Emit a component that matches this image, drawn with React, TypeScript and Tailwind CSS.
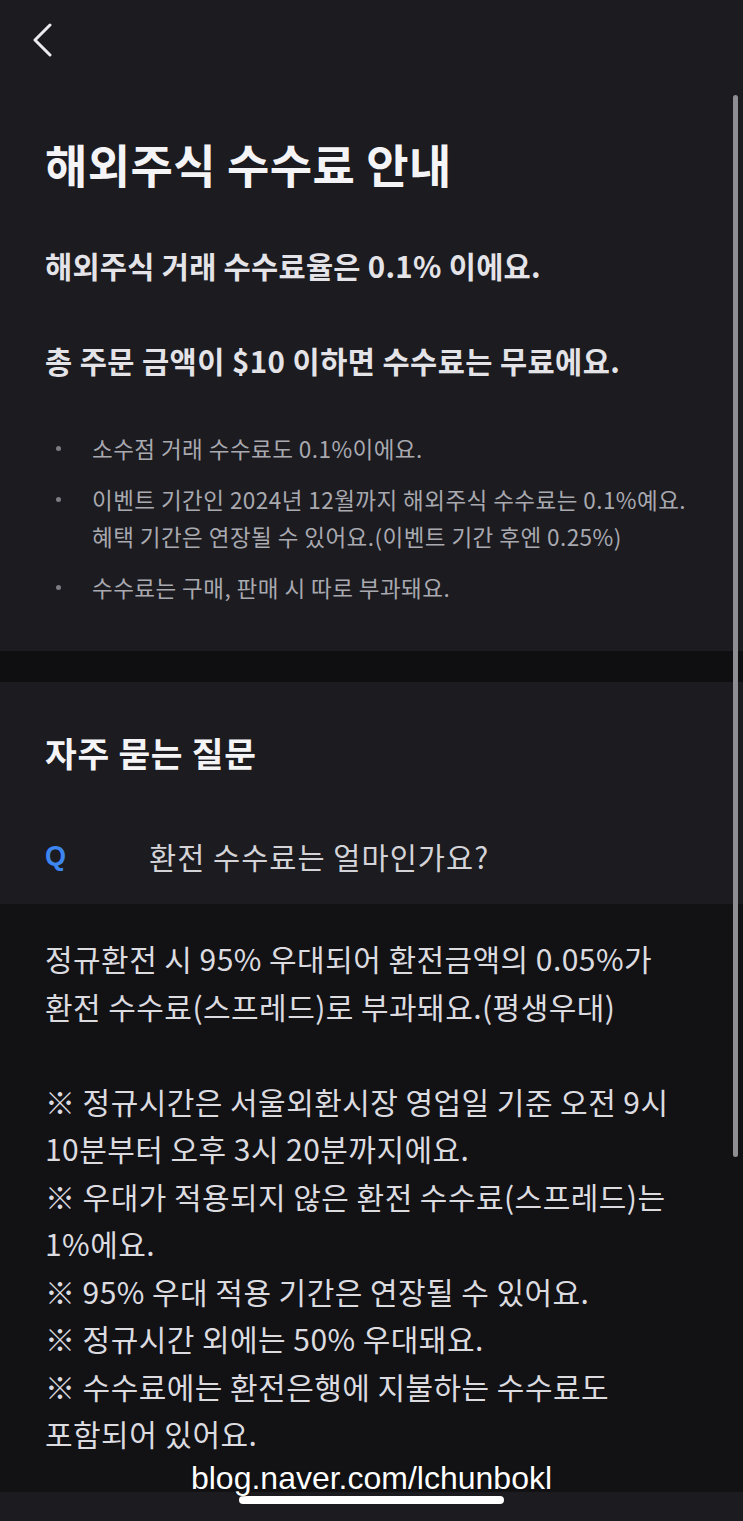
const KR = "font-['Noto_Sans_CJK_KR','Noto_Sans',sans-serif]";

const BULLETS = [
  ['소수점 거래 수수료도 0.1%이에요.'],
  ['이벤트 기간인 2024년 12월까지 해외주식 수수료는 0.1%예요.', '혜택 기간은 연장될 수 있어요.(이벤트 기간 후엔 0.25%)'],
  ['수수료는 구매, 판매 시 따로 부과돼요.'],
];

const ANSWER = [
  '정규환전 시 95% 우대되어 환전금액의 0.05%가',
  '환전 수수료(스프레드)로 부과돼요.(평생우대)',
  '',
  '※ 정규시간은 서울외환시장 영업일 기준 오전 9시',
  '10분부터 오후 3시 20분까지에요.',
  '※ 우대가 적용되지 않은 환전 수수료(스프레드)는',
  '1%에요.',
  '※ 95% 우대 적용 기간은 연장될 수 있어요.',
  '※ 정규시간 외에는 50% 우대돼요.',
  '※ 수수료에는 환전은행에 지불하는 수수료도',
  '포함되어 있어요.',
];

function BackIcon() {
  return (
    <svg width="24" height="36" viewBox="0 0 24 36" fill="none" aria-hidden>
      <path d="M17 3 L2 18 L17 33" stroke="#ececef" strokeWidth="3" strokeLinecap="round" strokeLinejoin="round" />
    </svg>
  );
}

export default function App() {
  return (
    <div className={`relative min-h-[1521px] w-[743px] overflow-hidden bg-[#1b1b20] ${KR}`}>
      {/* fee info */}
      <section className="bg-[#1b1b20] pb-[45px]">
        <div className="flex h-[80px] items-center pl-[33px]">
          <BackIcon />
        </div>
        <div className="px-[45px]">
          <h1 className="pt-[55px] text-[46px] font-bold leading-[56px] tracking-[0.01em] text-[#f4f4f6]">
            해외주식 수수료 안내
          </h1>
          <p className="mt-[54px] text-[29.5px] font-bold leading-[40px] tracking-[0.01em] text-[#e4e4e8]">
            해외주식 거래 수수료율은 0.1% 이에요.
          </p>
          <p className="mt-[55px] text-[29.5px] font-bold leading-[40px] tracking-[0.015em] text-[#e4e4e8]">
            총 주문 금액이 $10 이하면 수수료는 무료에요.
          </p>
          <ul className="mt-[50px] flex flex-col gap-[14px]">
            {BULLETS.map((lines) => (
              <li key={lines[0]} className="flex">
                <span className="flex h-[37px] w-[47px] shrink-0 items-center pl-[11px]">
                  <span className="h-[5px] w-[5px] rounded-full bg-[#7c7c83]" />
                </span>
                <span className="text-[22.5px] leading-[37px] tracking-[0.02em] whitespace-nowrap text-[#a9a9b0]">
                  {lines.map((l, i) => (
                    <span key={i} className="block">
                      {l}
                    </span>
                  ))}
                </span>
              </li>
            ))}
          </ul>
        </div>
      </section>

      <div className="h-[31px] bg-[#0f0f12]" />

      {/* FAQ */}
      <section className="bg-[#1b1b20] px-[45px] pt-[48px] pb-[28px]">
        <h2 className="text-[34.5px] font-bold leading-[44px] tracking-[0.02em] text-[#f4f4f6]">
          자주 묻는 질문
        </h2>
        <div className="mt-[62px] flex items-center">
          <span className="w-[104px] shrink-0 text-[27px] font-bold leading-[40px] text-[#3d86f0] font-['Liberation_Sans',sans-serif]">
            Q
          </span>
          <span className="text-[29.5px] leading-[40px] tracking-[0.035em] text-[#d4d4d8]">
            환전 수수료는 얼마인가요?
          </span>
        </div>
      </section>

      <section className="h-[588px] bg-[#121215] px-[45px] pt-[31px]">
        {ANSWER.map((line, i) => (
          <p key={i} className="h-[47.5px] text-[30px] leading-[47.5px] tracking-[0.015em] whitespace-nowrap text-[#dcdce0]">
            {line}
          </p>
        ))}
      </section>

      <div className="flex h-[28px] justify-center bg-[#1b1b20] pt-[4px]">
        <span className="h-[8px] w-[265px] rounded-full bg-white" />
      </div>

      {/* overlays */}
      <div className="absolute top-[95px] right-[5px] h-[1062px] w-[5px] rounded-full bg-[#8e8e93]" />
      <div className="absolute top-[1458px] left-0 right-0 text-center text-[32px] leading-[40px] text-white font-['Liberation_Sans',Arial,sans-serif] [text-shadow:0_0_2px_rgba(0,0,0,0.6)]">
        blog.naver.com/lchunbokl
      </div>
    </div>
  );
}
